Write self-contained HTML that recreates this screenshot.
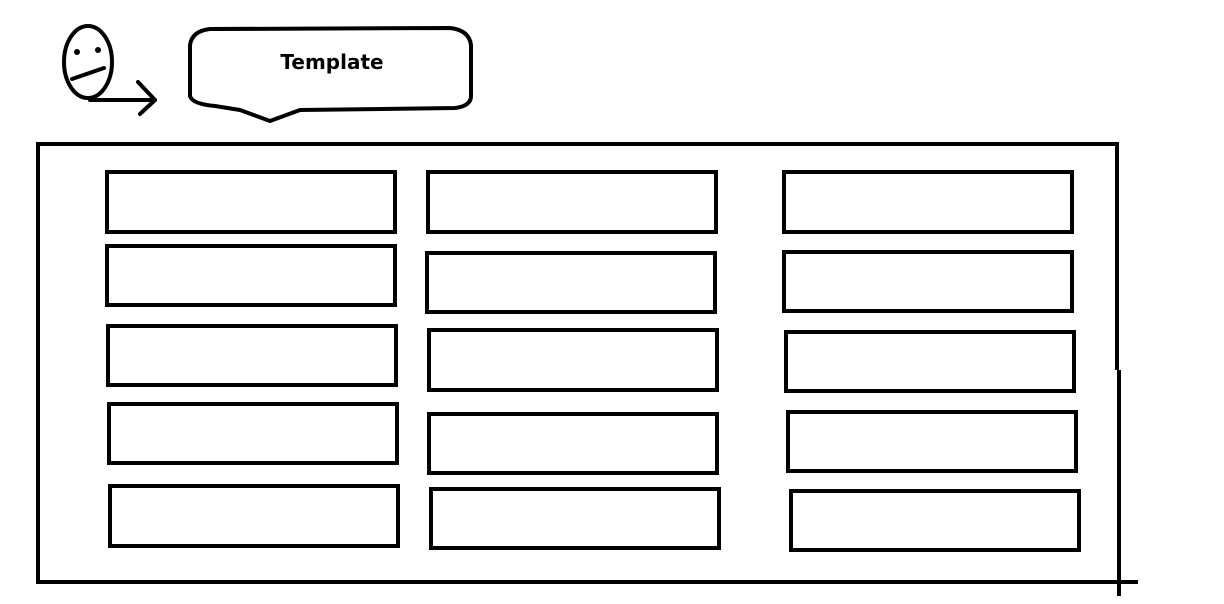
<!DOCTYPE html>
<html><head><style>html,body{margin:0;padding:0;background:#fff;width:1224px;height:604px;overflow:hidden}</style></head>
<body>
<svg width="1224" height="604" xmlns="http://www.w3.org/2000/svg">
<rect width="1224" height="604" fill="#fff"/>
<g fill="none" stroke="#000" stroke-width="4" stroke-linecap="round" stroke-linejoin="round">
<ellipse cx="88" cy="62" rx="24" ry="36"/>
<line x1="72" y1="79" x2="104" y2="68"/>
<line x1="90" y1="100" x2="155" y2="100"/>
<polyline points="138,82 155,100 140,114"/>
<path d="M210,29 Q192,31 190,45 L190,96 Q192,104 215,106 L240,110 L270,121 L300,110 L455,108 Q471,106 471,96 L471,45 Q469,30 450,28 Z"/>
</g>
<circle cx="77" cy="52" r="3" fill="#000"/>
<circle cx="98" cy="50" r="3" fill="#000"/>
<text x="332" y="69" text-anchor="middle" font-family="DejaVu Sans, sans-serif" font-weight="bold" font-size="20" fill="#000">Template</text>
<g fill="none" stroke="#000" stroke-width="4">
<line x1="38" y1="144" x2="1117" y2="144"/>
<line x1="38" y1="142" x2="38" y2="584"/>
<line x1="36" y1="582" x2="1138" y2="582"/>
<line x1="1117" y1="142" x2="1117" y2="370"/>
<line x1="1119" y1="370" x2="1119" y2="596"/>
<rect x="107" y="172" width="288" height="60"/>
<rect x="107" y="246" width="288" height="59"/>
<rect x="108" y="326" width="288" height="59"/>
<rect x="109" y="404" width="288" height="59"/>
<rect x="110" y="486" width="288" height="60"/>
<rect x="428" y="172" width="288" height="60"/>
<rect x="427" y="253" width="288" height="59"/>
<rect x="429" y="330" width="288" height="60"/>
<rect x="429" y="414" width="288" height="59"/>
<rect x="431" y="489" width="288" height="59"/>
<rect x="784" y="172" width="288" height="60"/>
<rect x="784" y="252" width="288" height="59"/>
<rect x="786" y="332" width="288" height="59"/>
<rect x="788" y="412" width="288" height="59"/>
<rect x="791" y="491" width="288" height="59"/>
</g>
</svg>
</body></html>
